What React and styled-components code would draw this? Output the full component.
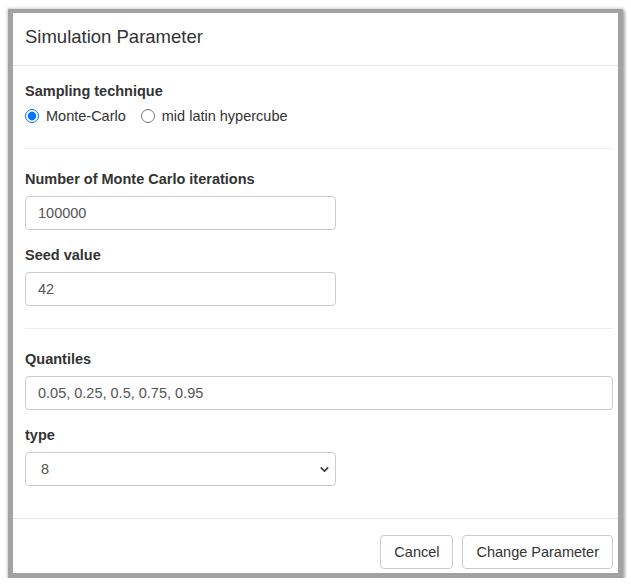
import React from 'react';
import styled, { createGlobalStyle } from 'styled-components';
import { ChevronDown } from 'lucide-react';

const Global = createGlobalStyle`
    body {
        margin: 0;
        background: #ffffff;
        font-family: "Liberation Sans", Arial, sans-serif;
        color: #333;
    }
    * { box-sizing: border-box; }
`

const Frame = styled.div`
    margin: 9px 0 0 8px;
    width: 615px;
    border: 5px solid #a2a2a2;
    border-top-width: 4px;
    box-shadow: 0 0 3px 1px rgba(0, 0, 0, 0.18), 2px 2px 3px rgba(0, 0, 0, 0.25);
    background: #fff;
`

const Header = styled.div`
    padding: 10px 12px 15px;
    border-bottom: 1px solid #e5e5e5;
    h4 {
        margin: 0;
        font-size: 18.5px;
        line-height: 27px;
        font-weight: normal;
        color: #333;
    }
`

const Body = styled.div`
    padding: 15px 5px 32px 12px;
`

const Label = styled.div`
    font-size: 14.5px;
    font-weight: bold;
    line-height: 20px;
    margin-bottom: ${p => p.$tight ? '5px' : '7px'};
`

const Group = styled.div`
    margin-bottom: ${p => p.$last ? '0' : '15px'};
`

const Divider = styled.hr`
    border: 0;
    border-top: 1px solid #eee;
    margin: 22px 0 20px;
`

const RadioRow = styled.div`
    display: flex;
    align-items: center;
    gap: 15px;
    font-size: 14.5px;
    line-height: 20px;
`

const RadioOption = styled.label`
    display: flex;
    align-items: center;
    gap: 7px;
    input {
        margin: 0;
        width: 14px;
        height: 14px;
        accent-color: #0075ff;
    }
`

const TextInput = styled.input`
    display: block;
    width: ${p => p.$full ? '100%' : '311px'};
    height: 34px;
    padding: 6px 12px;
    border: 1px solid #ccc;
    border-radius: 4px;
    font-family: inherit;
    font-size: 14.5px;
    color: #555;
    background: #fff;
    outline: none;
`

const SelectWrap = styled.div`
    position: relative;
    width: 311px;
    svg {
        position: absolute;
        right: 5px;
        top: 11px;
        pointer-events: none;
        color: #333;
    }
`

const Select = styled.select`
    appearance: none;
    display: block;
    width: 100%;
    height: 34px;
    padding: 6px 12px 6px 15px;
    border: 1px solid #ccc;
    border-radius: 4px;
    font-family: inherit;
    font-size: 14.5px;
    color: #555;
    background: #fff;
    outline: none;
`

const Footer = styled.div`
    display: flex;
    justify-content: flex-end;
    gap: 9px;
    padding: 16px 5px 4px 12px;
    border-top: 1px solid #e5e5e5;
`

const Button = styled.button`
    height: 34px;
    padding: 6px 13px;
    border: 1px solid #ccc;
    border-radius: 4px;
    background: #fff;
    font-family: inherit;
    font-size: 14.5px;
    color: #333;
    cursor: pointer;
`

export default function App() {
    return (
        <>
            <Global />
            <Frame>
                <Header><h4>Simulation Parameter</h4></Header>
                <Body>
                    <Group $last>
                        <Label $tight>Sampling technique</Label>
                        <RadioRow>
                            <RadioOption><input type="radio" name="tech" defaultChecked />Monte-Carlo</RadioOption>
                            <RadioOption><input type="radio" name="tech" />mid latin hypercube</RadioOption>
                        </RadioRow>
                    </Group>
                    <Divider />
                    <Group>
                        <Label>Number of Monte Carlo iterations</Label>
                        <TextInput defaultValue="100000" />
                    </Group>
                    <Group $last>
                        <Label>Seed value</Label>
                        <TextInput defaultValue="42" />
                    </Group>
                    <Divider />
                    <Group>
                        <Label>Quantiles</Label>
                        <TextInput $full defaultValue="0.05, 0.25, 0.5, 0.75, 0.95" />
                    </Group>
                    <Group $last>
                        <Label>type</Label>
                        <SelectWrap>
                            <Select defaultValue="8">
                                {[1, 2, 3, 4, 5, 6, 7, 8, 9].map(n => <option key={n} value={n}>{n}</option>)}
                            </Select>
                            <ChevronDown size={13} strokeWidth={2.75} />
                        </SelectWrap>
                    </Group>
                </Body>
                <Footer>
                    <Button>Cancel</Button>
                    <Button>Change Parameter</Button>
                </Footer>
            </Frame>
        </>
    );
}
